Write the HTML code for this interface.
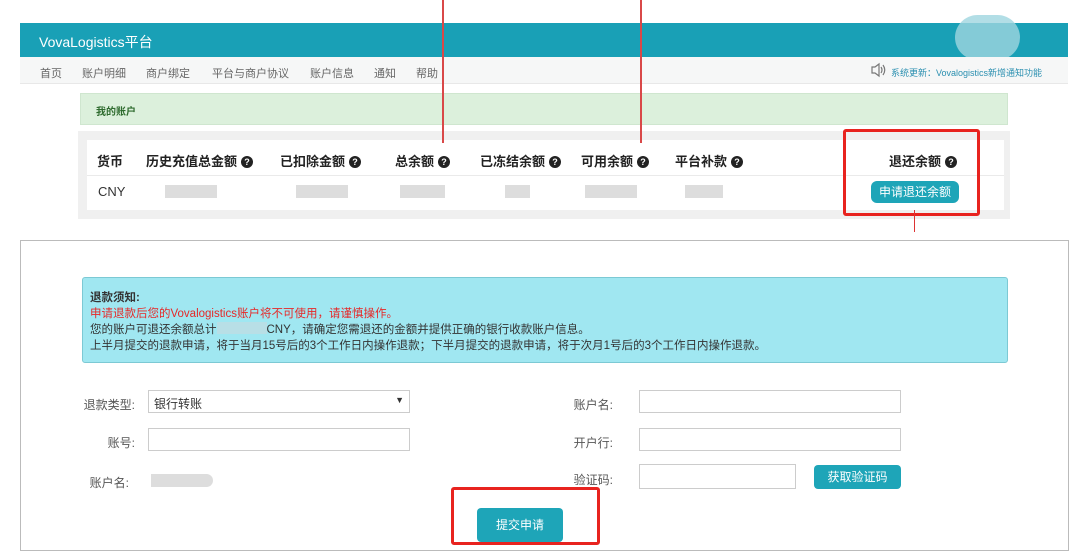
<!DOCTYPE html>
<html><head><meta charset="utf-8"><style>
*{margin:0;padding:0;box-sizing:border-box}
body{width:1080px;height:558px;background:#fff;position:relative;overflow:hidden;font-family:"Liberation Sans","Noto Sans CJK SC",sans-serif;color:#333}
.a{position:absolute}
.q{display:inline-block;width:12px;height:12px;border-radius:50%;background:#222;color:#fff;font-size:9px;line-height:12px;text-align:center;font-weight:bold;vertical-align:1px;margin-left:4px}
.th{font-size:13px;font-weight:bold;color:#222;top:151px}
.blur{background:#ddd;height:13px;top:185px}
.lbl{font-size:12px;color:#555;text-align:right;width:60px}
.inp{border:1px solid #ccc;background:#fff;height:23px}
.btn{background:#1ea5b8;color:#fff;border-radius:4px;text-align:center;font-size:12px}
</style></head><body>
<div class="a" style="left:20px;top:23px;width:1048px;height:34px;background:#19a0b6"></div>
<div class="a" style="left:39px;top:32px;color:#fff;font-size:14px">VovaLogistics平台</div>
<div class="a" style="left:955px;top:15px;width:65px;height:45px;border-radius:30px;background:#9fd6e0;opacity:.8"></div>
<div class="a" style="left:20px;top:57px;width:1048px;height:27px;background:#f6f7f7;border-bottom:1px solid #e8e8e8"></div>
<div class="a" style="left:40px;top:65px;font-size:11px;color:#666;word-spacing:0">首页<span style="margin-left:20px">账户明细</span><span style="margin-left:20px">商户绑定</span><span style="margin-left:22px">平台与商户协议</span><span style="margin-left:21px">账户信息</span><span style="margin-left:20px">通知</span><span style="margin-left:20px">帮助</span></div>
<svg class="a" style="left:870px;top:62px" width="16" height="16" viewBox="0 0 16 16" fill="none" stroke="#777" stroke-width="1.2"><path d="M2 5h3l4-3v12l-4-3H2z"/><path d="M11 5q2 3 0 6M13 3q3.5 5 0 10"/></svg>
<div class="a" style="left:891px;top:66px;font-size:9px;color:#2a8fb0">系统更新：Vovalogistics新增通知功能</div>
<div class="a" style="left:80px;top:93px;width:928px;height:32px;background:#dcf0dc;border:1px solid #cfe6cf"></div>
<div class="a" style="left:96px;top:103px;font-size:10px;font-weight:bold;color:#2e6b2e">我的账户</div>
<div class="a" style="left:78px;top:131px;width:932px;height:88px;background:#f0f0f0"></div>
<div class="a" style="left:87px;top:140px;width:917px;height:70px;background:#fff"></div>
<div class="a" style="left:87px;top:175px;width:917px;height:1px;background:#eaeaea"></div>
<div class="a th" style="left:97px">货币</div>
<div class="a th" style="left:146px">历史充值总金额<span class="q">?</span></div>
<div class="a th" style="left:280px">已扣除金额<span class="q">?</span></div>
<div class="a th" style="left:395px">总余额<span class="q">?</span></div>
<div class="a th" style="left:480px">已冻结余额<span class="q">?</span></div>
<div class="a th" style="left:581px">可用余额<span class="q">?</span></div>
<div class="a th" style="left:675px">平台补款<span class="q">?</span></div>
<div class="a th" style="left:889px">退还余额<span class="q">?</span></div>
<div class="a" style="left:98px;top:184px;font-size:13px;color:#333">CNY</div>
<div class="a blur" style="left:165px;width:52px"></div>
<div class="a blur" style="left:296px;width:52px"></div>
<div class="a blur" style="left:400px;width:45px"></div>
<div class="a blur" style="left:505px;width:25px"></div>
<div class="a blur" style="left:585px;width:52px"></div>
<div class="a blur" style="left:685px;width:38px"></div>
<div class="a btn" style="left:871px;top:181px;width:88px;height:22px;line-height:22px;border-radius:6px">申请退还余额</div>
<div class="a" style="left:442px;top:0;width:2px;height:143px;background:#d94848"></div>
<div class="a" style="left:640px;top:0;width:2px;height:143px;background:#d94848"></div>
<div class="a" style="left:843px;top:129px;width:137px;height:87px;border:3px solid #e8231f;border-radius:3px"></div>
<div class="a" style="left:914px;top:210px;width:1px;height:22px;background:#d33"></div>
<div class="a" style="left:20px;top:240px;width:1049px;height:311px;border:1px solid #bbb;background:#fff"></div>
<div class="a" style="left:82px;top:277px;width:926px;height:86px;background:#a0e7f1;border:1px solid #7cc9d4;border-radius:3px"></div>
<div class="a" style="left:90px;top:290px;font-size:11.5px;line-height:16px;color:#333">
<b>退款须知:</b><br><span style="color:#e62828">申请退款后您的Vovalogistics账户将不可使用，请谨慎操作。</span><br>您的账户可退还余额总计<span style="display:inline-block;width:50px;height:12px;background:#b8dfe6;vertical-align:-1px"></span>CNY，请确定您需退还的金额并提供正确的银行收款账户信息。<br>上半月提交的退款申请，将于当月15号后的3个工作日内操作退款；下半月提交的退款申请，将于次月1号后的3个工作日内操作退款。</div>
<div class="a lbl" style="left:75px;top:396px">退款类型:</div>
<div class="a inp" style="left:148px;top:390px;width:262px;font-size:12px;padding:4px 5px;color:#333">银行转账<span style="float:right;font-size:9px">▼</span></div>
<div class="a lbl" style="left:75px;top:434px">账号:</div>
<div class="a inp" style="left:148px;top:428px;width:262px"></div>
<div class="a lbl" style="left:69px;top:474px">账户名:</div>
<div class="a" style="left:151px;top:474px;width:62px;height:13px;background:#ddd;border-radius:0 7px 7px 0"></div>
<div class="a lbl" style="left:553px;top:396px">账户名:</div>
<div class="a inp" style="left:639px;top:390px;width:262px"></div>
<div class="a lbl" style="left:553px;top:434px">开户行:</div>
<div class="a inp" style="left:639px;top:428px;width:262px"></div>
<div class="a lbl" style="left:553px;top:471px">验证码:</div>
<div class="a inp" style="left:639px;top:464px;width:157px;height:25px"></div>
<div class="a btn" style="left:814px;top:465px;width:87px;height:24px;line-height:24px">获取验证码</div>
<div class="a btn" style="left:477px;top:508px;width:86px;height:34px;line-height:34px">提交申请</div>
<div class="a" style="left:451px;top:487px;width:149px;height:58px;border:3px solid #e8231f;border-radius:3px"></div>
</body></html>
